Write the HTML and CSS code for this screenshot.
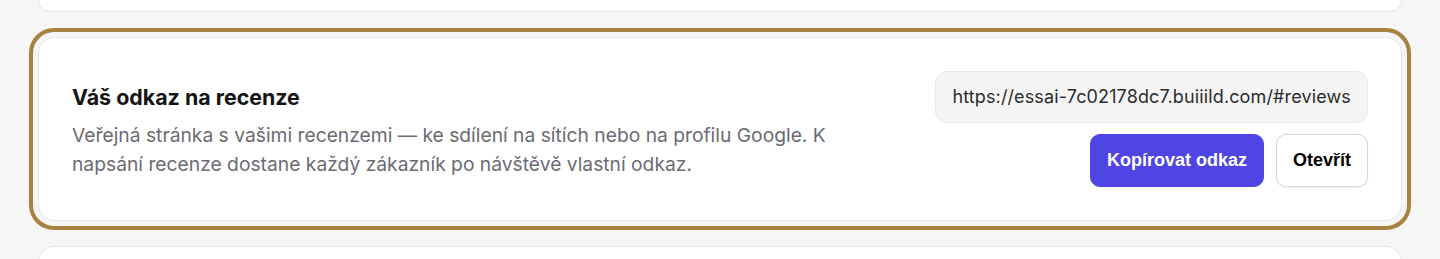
FILE: index.html
```html
<html>
    <head>
        <title>
            Odkaz na recenze
        </title>
        <link rel="stylesheet" href="styles.css">
    </head>
    <body>
        <div class="stack">
            <div class="card card-cut"></div>
            <div class="card card-highlight">
                <div class="link-info">
                    <h3 class="link-title">Váš odkaz na recenze</h3>
                    <p class="link-desc">Veřejná stránka s vašimi recenzemi — ke sdílení na sítích nebo na profilu Google. K napsání recenze dostane každý zákazník po návštěvě vlastní odkaz.</p>
                </div>
                <div class="link-actions">
                    <div class="link-url">https://essai-7c02178dc7.buiiild.com/#reviews</div>
                    <div class="button-row">
                        <button class="button button-primary">Kopírovat odkaz</button>
                        <button class="button button-light">Otevřít</button>
                    </div>
                </div>
            </div>
            <div class="card card-next"></div>
        </div>
    </body>
</html>
```

FILE: styles.css
```css
body {
    background-color: #f6f6f6;
    font-family: Inter, "Noto Sans", sans-serif;
    margin: 0;
    padding: 0;
}
.stack {
    display: flex;
    flex-direction: column;
    gap: 25px;
    padding: 0 38px;
}
.card {
    background-color: #fff;
    border: 1px solid #e6e6e6;
    border-radius: 16px;
    box-sizing: border-box;
}
.card-cut {
    height: 12px;
    border-top: none;
    border-radius: 0 0 16px 16px;
}
.card-next {
    height: 40px;
    border-bottom: none;
    border-radius: 16px 16px 0 0;
}
.card-highlight {
    display: flex;
    align-items: center;
    justify-content: space-between;
    gap: 32px;
    padding: 33px;
    outline: 4px solid #a98241;
    outline-offset: 5px;
}
.link-info {
    flex: 1;
    padding-top: 4px;
}
.link-title {
    margin: 0;
    font-size: 21.4px;
    line-height: 28px;
    font-weight: 700;
    color: #141414;
}
.link-desc {
    margin: 10px 0 0 0;
    max-width: 800px;
    font-size: 19.25px;
    line-height: 29px;
    color: #6b6b73;
}
.link-actions {
    display: flex;
    flex-direction: column;
    align-items: flex-end;
    gap: 11px;
}
.link-url {
    background-color: #f5f5f5;
    border: 1px solid #e8e8e8;
    border-radius: 12px;
    padding: 11px 16px;
    font-size: 18px;
    letter-spacing: 0.13px;
    line-height: 28px;
    color: #2b2b2b;
    white-space: nowrap;
}
.button-row {
    display: flex;
    gap: 12px;
}
.button {
    font-family: "Liberation Sans", Arial, sans-serif;
    font-size: 18px;
    font-weight: 700;
    line-height: 23px;
    padding: 14px 16px;
    border-radius: 10px;
    cursor: pointer;
}
.button-primary {
    background-color: #4f45e4;
    border: 1px solid #4f45e4;
    color: #fff;
}
.button-light {
    background-color: #fff;
    border: 1px solid #d6d6d6;
    color: #000;
    box-shadow: 0 1px 2px rgba(0, 0, 0, 0.06);
}
```
